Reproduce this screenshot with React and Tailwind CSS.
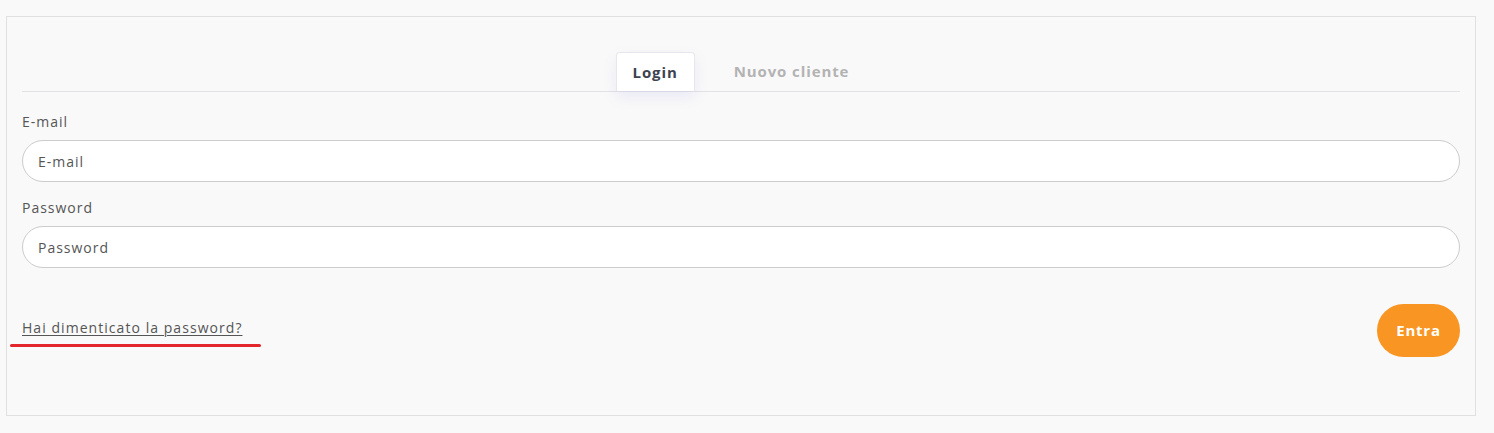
import React from "react";

export default function App() {
  return (
    <div className="min-h-[433px] w-full bg-[#f9f9f9] pt-4 pl-[6px] pr-[18px]" style={{ fontFamily: "'Open Sans', 'Liberation Sans', sans-serif" }}>
      <div className="relative h-[400px] border border-[#e0e0e0] bg-[#f9f9f9] px-[15px] pt-[35px]">
        <div className="flex justify-center border-b border-[#e2e2e6]">
          <div className="-mb-px flex h-[39px] w-[79px] items-center justify-center rounded-t-[4px] border border-b-0 border-[#e6e6ec] bg-white text-[15px] font-bold tracking-[0.06em] text-[#3d4350] shadow-[0_6px_14px_rgba(120,120,220,0.12)]">
            Login
          </div>
          <div className="flex h-[39px] items-center pl-[39px] pr-[17px] text-[15px] font-bold tracking-[0.06em] text-[#b3b3b3]">
            Nuovo cliente
          </div>
        </div>
        <div className="pt-[20px]">
          <label className="block text-[14px] leading-[20px] tracking-[0.07em] text-[#555555]">E-mail</label>
          <div className="mt-[8px] flex h-[42px] items-center rounded-full border border-[#cccccc] bg-white px-[15px] text-[14px] tracking-[0.07em] text-[#555555]">
            E-mail
          </div>
          <label className="mt-[16px] block text-[14px] leading-[20px] tracking-[0.07em] text-[#555555]">Password</label>
          <div className="mt-[8px] flex h-[42px] items-center rounded-full border border-[#cccccc] bg-white px-[15px] text-[14px] tracking-[0.07em] text-[#555555]">
            Password
          </div>
        </div>
        <div className="mt-[36px] flex items-center justify-between">
          <div className="relative -mt-[7px]">
            <a className="text-[14px] tracking-[0.075em] text-[#555555] underline underline-offset-2">Hai dimenticato la password?</a>
            <div className="absolute left-[-12px] top-[29px] h-[3px] w-[251px] rounded-full bg-[#e3262b]" />
          </div>
          <button className="h-[53px] w-[83px] rounded-full bg-[#f99522] text-[15px] font-bold tracking-[0.05em] text-white">Entra</button>
        </div>
      </div>
    </div>
  );
}
